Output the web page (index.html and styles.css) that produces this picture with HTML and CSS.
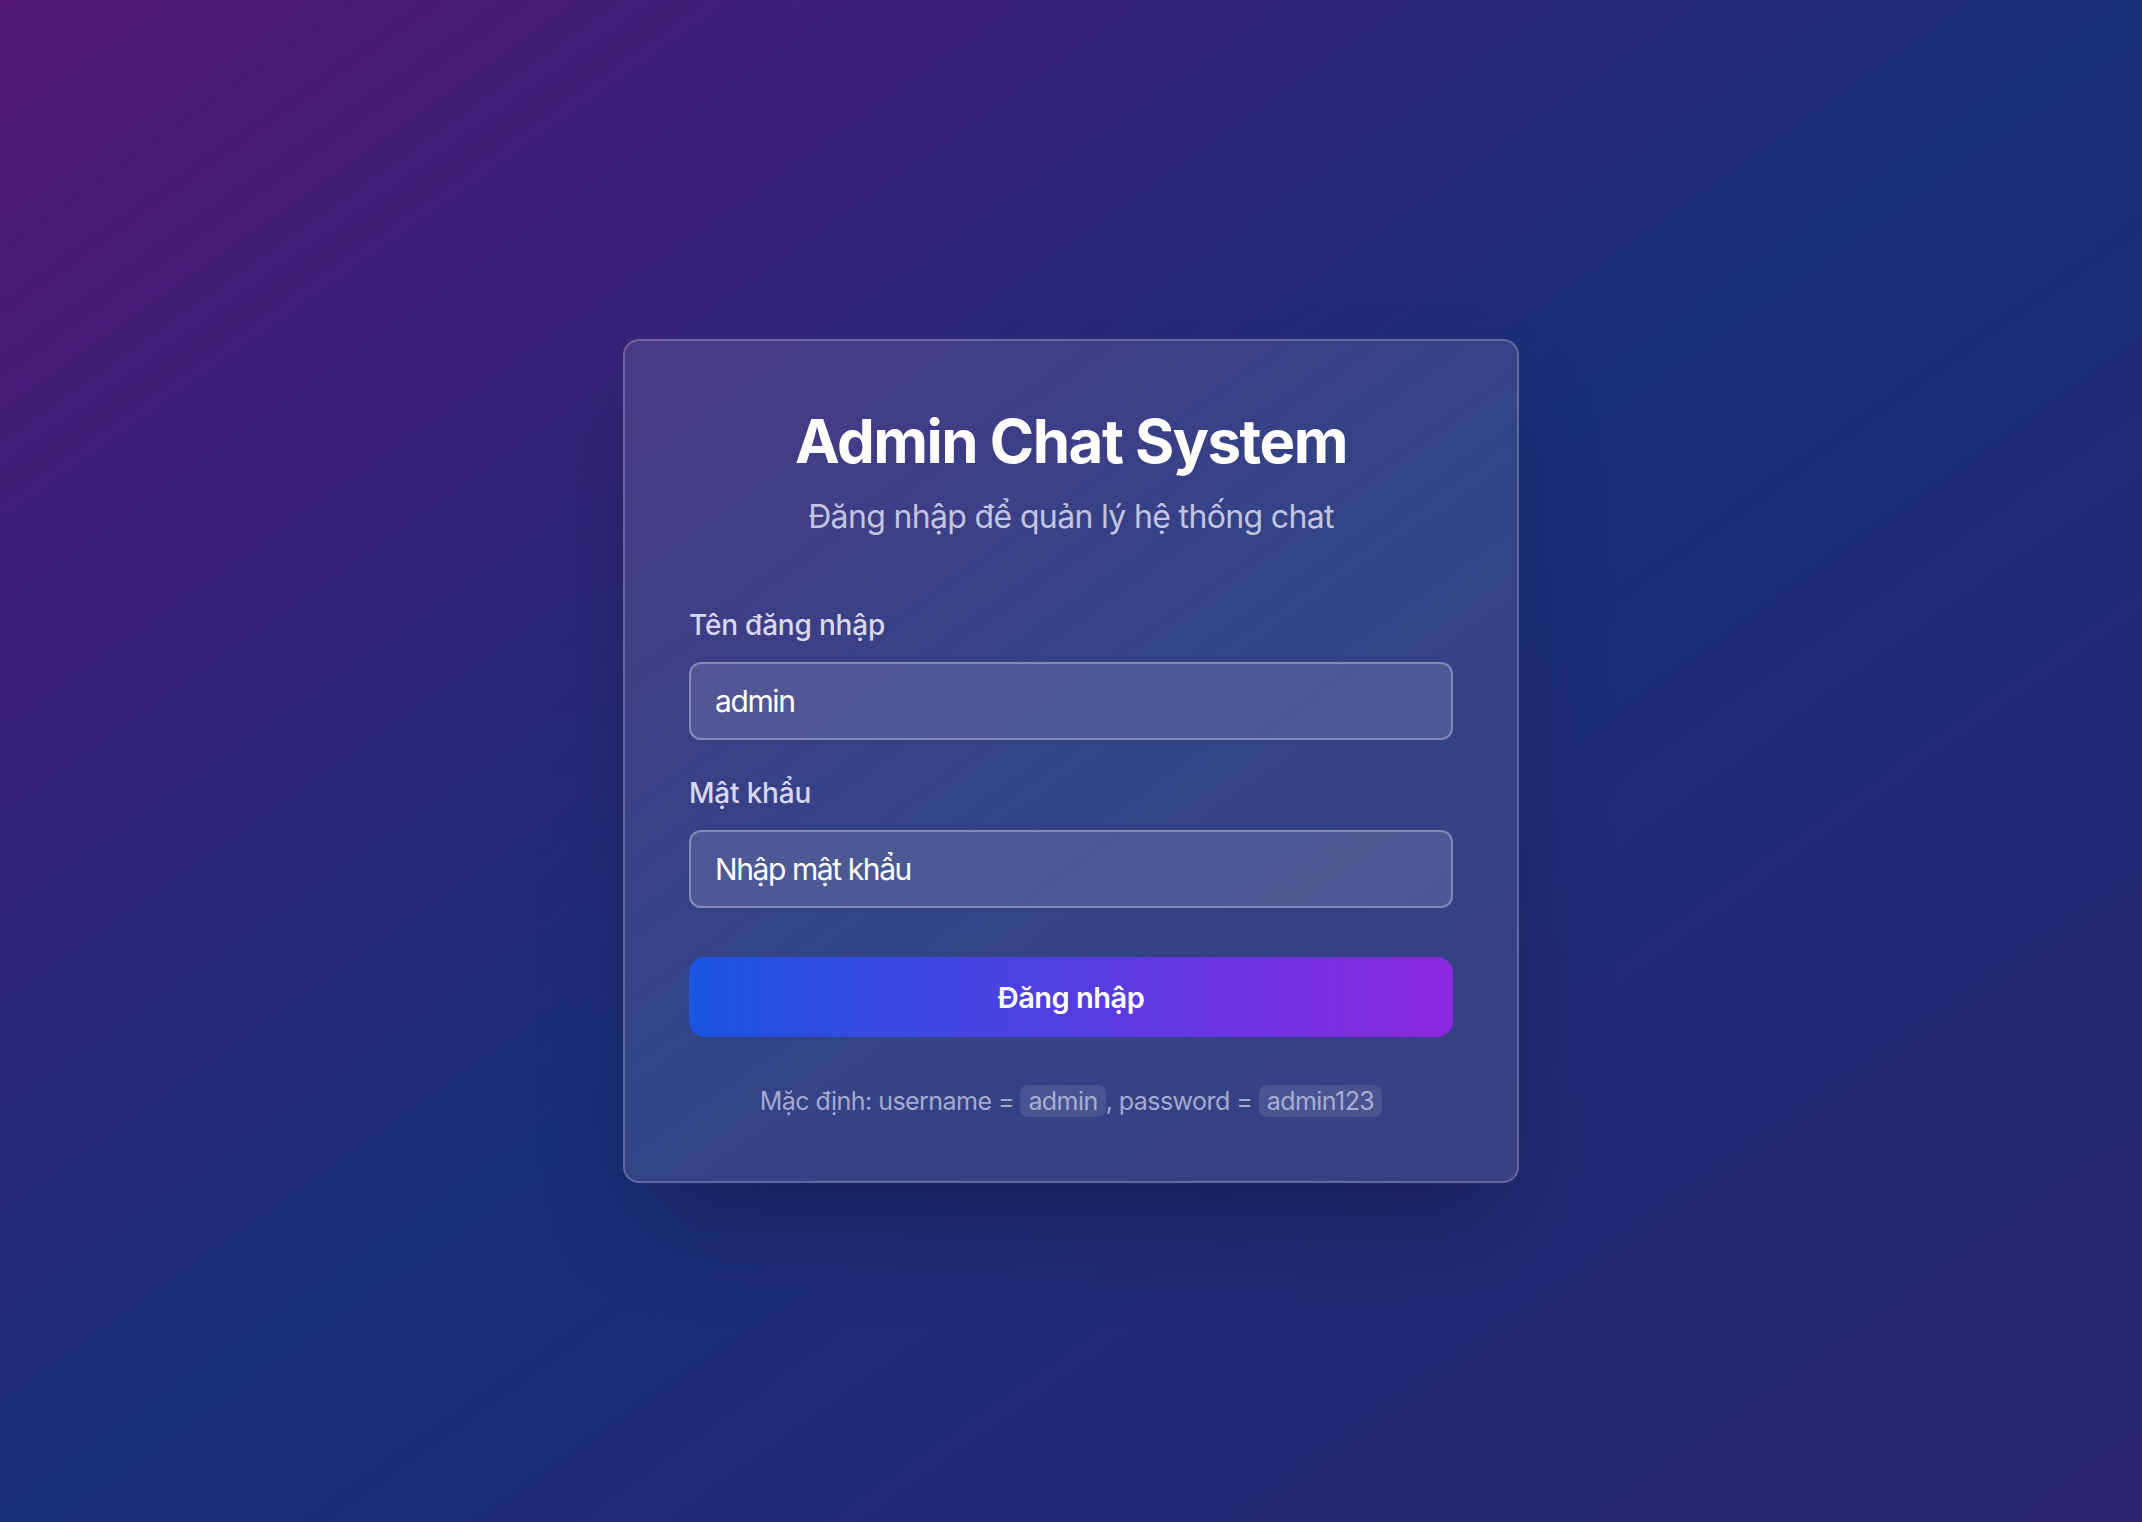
FILE: index.html
```html
<!DOCTYPE html>
<html lang="vi">
<head>
<meta charset="utf-8">
<title>Admin Chat System</title>
<link rel="stylesheet" href="styles.css">
</head>
<body>
<main class="page">
  <section class="card">
    <header class="card-header">
      <h1 class="title">Admin Chat System</h1>
      <p class="subtitle">Đăng nhập để quản lý hệ thống chat</p>
    </header>
    <form class="form">
      <div class="field">
        <label class="label" for="username">Tên đăng nhập</label>
        <input class="input" id="username" type="text" value="admin">
      </div>
      <div class="field">
        <label class="label" for="password">Mật khẩu</label>
        <input class="input" id="password" type="password" placeholder="Nhập mật khẩu">
      </div>
      <button class="button" type="button">Đăng nhập</button>
    </form>
    <p class="hint">Mặc định: username = <code class="code">admin</code>, password = <code class="code">admin123</code></p>
  </section>
</main>
</body>
</html>
```

FILE: styles.css
```css
* {
  box-sizing: border-box;
}

html, body {
  margin: 0;
  padding: 0;
}

body {
  font-family: Inter, "Noto Sans", "Liberation Sans", sans-serif;
  background: linear-gradient(to bottom right, #521776 0%, #1a2f7a 50%, #2b2470 100%);
  min-height: 100vh;
  color: #fff;
}

.page {
  min-height: 100vh;
  display: flex;
  align-items: center;
  justify-content: center;
}

.card {
  width: 896px;
  padding: 64px;
  border: 2px solid rgba(255, 255, 255, 0.22);
  border-radius: 16px;
  background: rgba(255, 255, 255, 0.1);
  box-shadow: 0 50px 100px -24px rgba(0, 0, 0, 0.3);
}

.card-header {
  text-align: center;
  margin-bottom: 63px;
}

.title {
  margin: 0 0 16px;
  font-size: 60px;
  line-height: 72px;
  font-weight: 700;
  letter-spacing: -1.5px;
  color: #fff;
}

.subtitle {
  margin: 0;
  font-size: 32px;
  line-height: 48px;
  color: #c3c5e0;
  letter-spacing: -0.65px;
}

.form {
  display: flex;
  flex-direction: column;
}

.field {
  display: flex;
  flex-direction: column;
  margin-bottom: 32px;
}

.field + .field {
  margin-bottom: 49px;
}

.label {
  font-size: 28px;
  line-height: 42px;
  font-weight: 500;
  color: #d8d9ee;
  margin-bottom: 16px;
  letter-spacing: -0.2px;
}

.input {
  width: 100%;
  height: 78px;
  padding: 0 24px;
  font-family: inherit;
  font-size: 30px;
  color: #fff;
  background: rgba(255, 255, 255, 0.12);
  border: 2px solid rgba(255, 255, 255, 0.3);
  border-radius: 12px;
  outline: none;
  letter-spacing: -1.4px;
}

.input::placeholder {
  color: #fff;
  opacity: 1;
}

.button {
  height: 80px;
  width: 100%;
  border: none;
  border-radius: 16px;
  background: linear-gradient(to right, #1b55e2, #8b27e0);
  color: #fff;
  font-family: inherit;
  font-size: 29px;
  font-weight: 600;
  letter-spacing: -0.5px;
  cursor: pointer;
}

.hint {
  margin: 48px 0 0;
  text-align: center;
  font-size: 25px;
  line-height: 32px;
  color: #a6aacf;
  letter-spacing: -0.55px;
}

.code {
  font-family: inherit;
  font-size: 25px;
  background: rgba(255, 255, 255, 0.1);
  border-radius: 8px;
  padding: 1px 8px;
  color: #a9add3;
}
```
